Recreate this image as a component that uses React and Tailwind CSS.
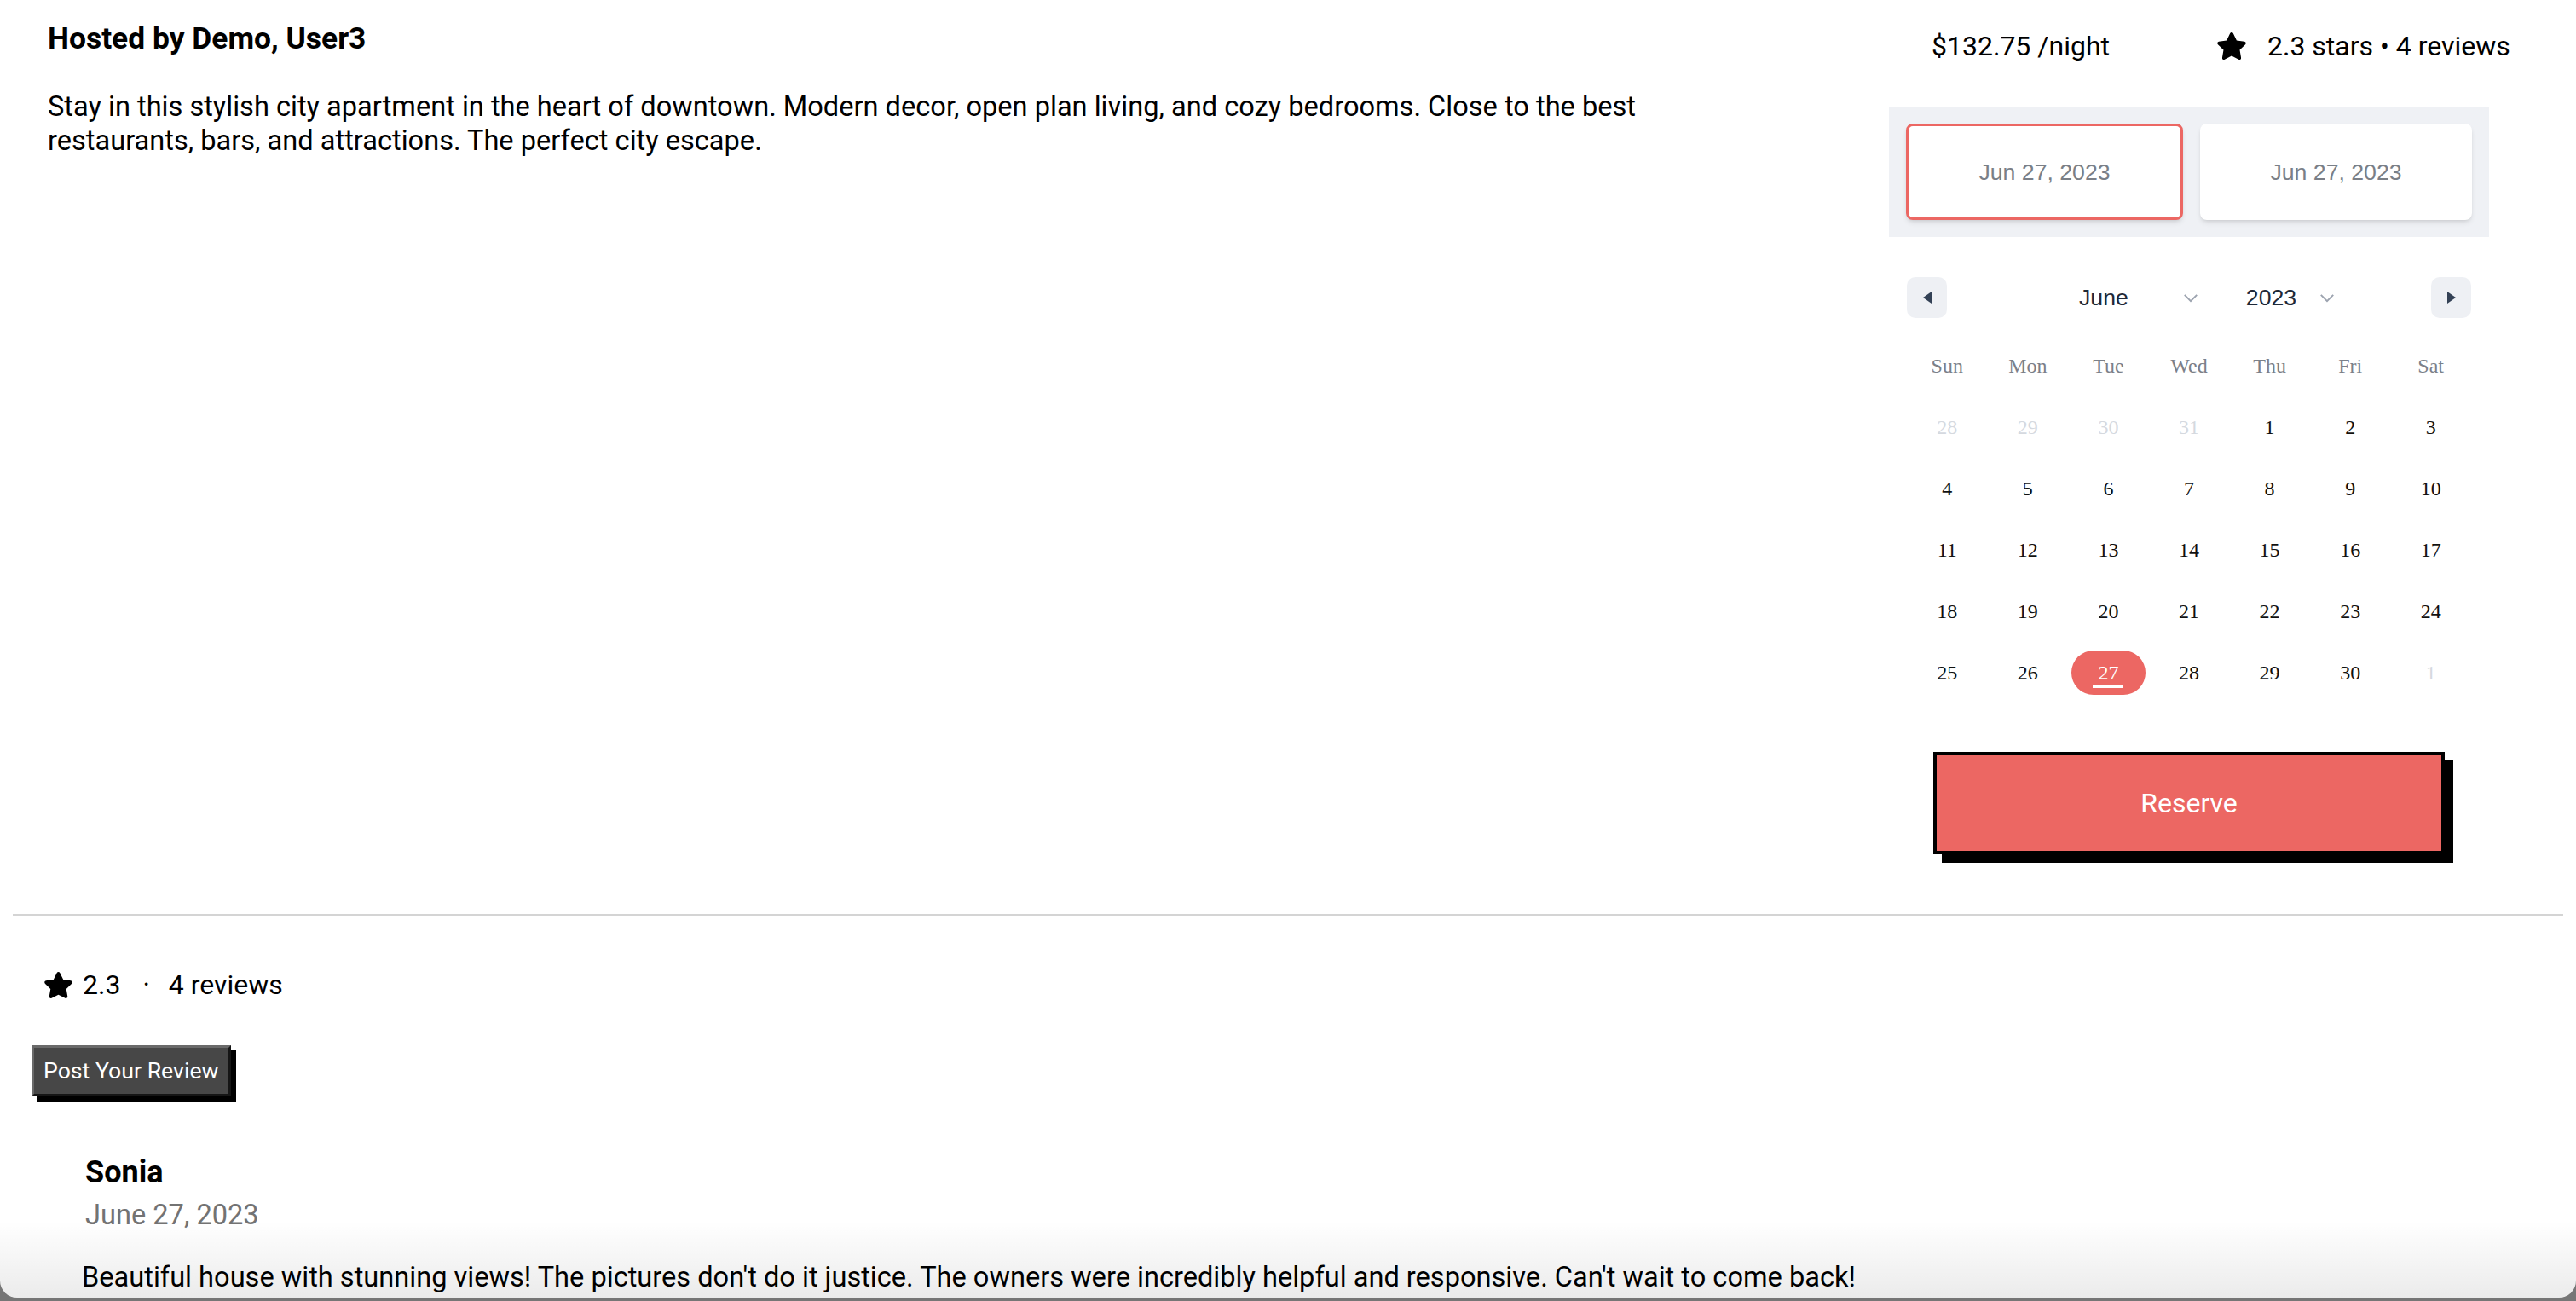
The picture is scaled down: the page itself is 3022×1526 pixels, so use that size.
import React from 'react';
import { FaStar } from 'react-icons/fa';

const weeks = [
  [[28, true], [29, true], [30, true], [31, true], [1], [2], [3]],
  [[4], [5], [6], [7], [8], [9], [10]],
  [[11], [12], [13], [14], [15], [16], [17]],
  [[18], [19], [20], [21], [22], [23], [24]],
  [[25], [26], [27, false, true], [28], [29], [30], [1, true]],
];

const weekdays = ['Sun', 'Mon', 'Tue', 'Wed', 'Thu', 'Fri', 'Sat'];

function Chevron({ className }) {
  return (
    <svg viewBox="0 0 20 12" className={className} fill="none" stroke="#9ca3af" strokeWidth="2.2">
      <path d="M2 2l8 8 8-8" />
    </svg>
  );
}

function Calendar() {
  return (
    <div className="mt-[47px] px-[21px] font-['Liberation_Serif',serif]">
      {/* header */}
      <div className="flex items-center h-[48px]">
        <button className="w-[47px] h-[48px] rounded-[10px] bg-[#eef0f4] flex items-center justify-center">
          <svg viewBox="0 0 10 14" className="w-[10px] h-[14px]"><path d="M10 0v14L0 7z" fill="#334155" /></svg>
        </button>
        <div className="ml-[155px] flex items-center font-['Liberation_Sans',Arial,sans-serif] text-[26.67px] text-[#1f2937]">
          <span>June</span>
          <Chevron className="ml-[64px] w-[18px] h-[11px]" />
          <span className="ml-[56px]">2023</span>
          <Chevron className="ml-[27px] w-[18px] h-[11px]" />
        </div>
        <button className="ml-auto w-[47px] h-[48px] rounded-[10px] bg-[#eef0f4] flex items-center justify-center">
          <svg viewBox="0 0 10 14" className="w-[10px] h-[14px]"><path d="M0 0v14L10 7z" fill="#334155" /></svg>
        </button>
      </div>

      <div className="mt-[20px] grid grid-cols-7 h-[72px] items-center text-[24px] text-[#7b8089]">
        {weekdays.map((d) => (
          <div key={d} className="text-center">{d}</div>
        ))}
      </div>

      {weeks.map((week, i) => (
        <div key={i} className="grid grid-cols-7 h-[72px] items-center text-[24px]">
          {week.map(([n, muted, selected], j) => (
            <div key={j} className="flex justify-center">
              {selected ? (
                <div className="w-[87px] h-[52px] rounded-[26px] bg-[#ec6763] flex items-center justify-center text-white">
                  <span className="inline-block px-[6px] pt-[5px] pb-[1px] border-b-[4px] border-white leading-[26px]">{n}</span>
                </div>
              ) : (
                <span className={muted ? 'text-[#d5d9df]' : 'text-[#111]'}>{n}</span>
              )}
            </div>
          ))}
        </div>
      ))}
    </div>
  );
}

function BookingPanel() {
  return (
    <div className="w-[704px] shrink-0 mr-[102px] pt-[30px]">
      <div className="flex items-center h-[48px] pl-[50px] text-[32px] text-black whitespace-nowrap">
        <span className="shrink-0">$132.75 /night</span>
        <FaStar className="shrink-0 ml-[125px] w-[36px] h-[36px]" />
        <span className="shrink-0 ml-[24px]">2.3 stars • 4 reviews</span>
      </div>

      <div className="mt-[47px] bg-[#eff1f5] p-[20px] flex gap-[20px] font-['Liberation_Sans',Arial,sans-serif]">
        <div className="flex-1 h-[113px] rounded-[8px] bg-white border-[3px] border-[#ec6763] shadow-md flex items-center justify-center text-[26.67px] text-[#7a7f87]">
          Jun 27, 2023
        </div>
        <div className="flex-1 h-[113px] rounded-[8px] bg-white shadow-md flex items-center justify-center text-[26.67px] text-[#7a7f87]">
          Jun 27, 2023
        </div>
      </div>

      <Calendar />

      <button className="mt-[57px] mx-auto block w-[600px] h-[120px] bg-[#ec6763] border-[4px] border-black shadow-[10px_10px_0_#000] text-white text-[32px]">
        Reserve
      </button>
    </div>
  );
}

export default function App() {
  return (
    <div className="w-full h-[1526px] bg-[#767676] overflow-hidden">
      <div className="relative h-[1522px] bg-white rounded-b-[20px] overflow-hidden font-['Roboto',sans-serif] text-black">
        <div className="flex">
          <div className="flex-1 pl-[56px] pt-[23px]">
            <h2 className="text-[35.4px] leading-[44px] font-bold">Hosted by Demo, User3</h2>
            <p className="mt-[38px] max-w-[1990px] text-[32.6px] leading-[40px]">
              Stay in this stylish city apartment in the heart of downtown. Modern decor, open plan living, and cozy bedrooms. Close to the best restaurants, bars, and attractions. The perfect city escape.
            </p>
          </div>
          <BookingPanel />
        </div>

        <div className="mx-[15px] mt-[70px] h-[2px] bg-[#d4d4d4]" />

        <div className="pl-[37px]">
          <div className="mt-[61px] ml-[14px] flex items-center h-[40px] text-[32px]">
            <FaStar className="w-[35px] h-[35px]" />
            <span className="ml-[11px]">2.3</span>
            <span className="ml-[26px]">·</span>
            <span className="ml-[22px]">4 reviews</span>
          </div>

          <button className="mt-[51px] block h-[60px] px-[11px] bg-[#474747] text-white text-[26.67px] border-[3px] [border-style:outset] border-[#6a6a6a] shadow-[6px_6px_0_#000]">
            Post Your Review
          </button>

          <div className="mt-[67px] pl-[63px]">
            <h3 className="text-[36px] leading-[44px] font-bold">Sonia</h3>
            <div className="mt-[8px] text-[32.6px] leading-[40px] text-[#737373]">June 27, 2023</div>
            <p className="mt-[33px] -ml-[4px] text-[32.6px] leading-[40px]">
              Beautiful house with stunning views! The pictures don't do it justice. The owners were incredibly helpful and responsive. Can't wait to come back!
            </p>
          </div>
        </div>

        {/* window bottom shading */}
        <div className="pointer-events-none absolute inset-x-0 bottom-0 h-[90px] bg-gradient-to-b from-transparent to-[rgba(0,0,0,0.08)]" />
      </div>
    </div>
  );
}
